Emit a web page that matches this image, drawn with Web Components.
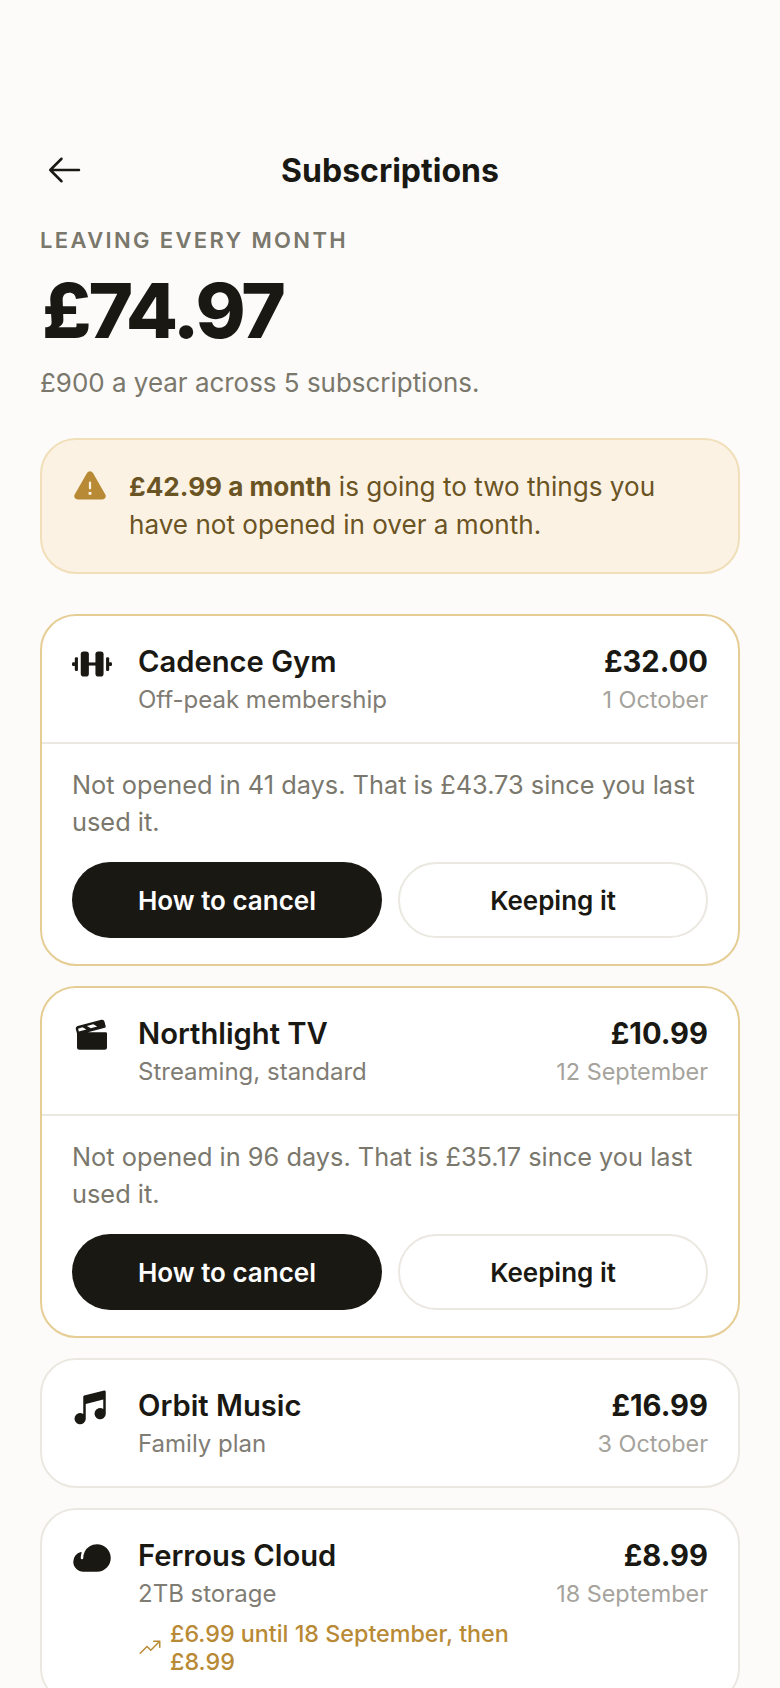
<!DOCTYPE html>
<html lang="en">
<head>
<meta charset="utf-8">
<title>Subscriptions</title>
<style>
  html, body { margin: 0; padding: 0; height: 1688px; overflow: hidden; background: #fcfbf9; }
  body { font-family: Inter, "Liberation Sans", sans-serif; color: #1a1813; }
</style>
</head>
<body>
<subs-page>
  <subs-header title-text="Subscriptions"></subs-header>
  <subs-summary label="Leaving every month" amount="£74.97" note="£900 a year across 5 subscriptions."></subs-summary>
  <subs-alert><strong>£42.99 a month</strong> is going to two things you have not opened in over a month.</subs-alert>
  <subs-list>
    <subs-card icon="barbell" name="Cadence Gym" plan="Off-peak membership" price="£32.00" date="1 October" flagged>
      <subs-nudge>Not opened in 41 days. That is £43.73 since you last used it.</subs-nudge>
    </subs-card>
    <subs-card icon="film" name="Northlight TV" plan="Streaming, standard" price="£10.99" date="12 September" flagged>
      <subs-nudge>Not opened in 96 days. That is £35.17 since you last used it.</subs-nudge>
    </subs-card>
    <subs-card icon="music" name="Orbit Music" plan="Family plan" price="£16.99" date="3 October"></subs-card>
    <subs-card icon="cloud" name="Ferrous Cloud" plan="2TB storage" price="£8.99" date="18 September" rise="£6.99 until 18 September, then £8.99"></subs-card>
  </subs-list>
</subs-page>

<script>
const ICONS = {
  back: `<path d="M224 128H40M112 56l-72 72 72 72" fill="none" stroke="currentColor" stroke-width="16" stroke-linecap="round" stroke-linejoin="round"/>`,
  warning: `<path d="M236.8,188.09,149.35,36.22h0a24.76,24.76,0,0,0-42.7,0L19.2,188.09a23.51,23.51,0,0,0,0,23.72A24.35,24.35,0,0,0,40.55,224h174.9a24.35,24.35,0,0,0,21.33-12.19A23.51,23.51,0,0,0,236.8,188.09ZM120,104a8,8,0,0,1,16,0v40a8,8,0,0,1-16,0Zm8,88a12,12,0,1,1,12-12A12,12,0,0,1,128,192Z"/>`,
  barbell: `<rect x="0" y="116" width="22" height="24" rx="8"/><rect x="18" y="84" width="20" height="88" rx="8"/><rect x="56" y="48" width="52" height="160" rx="18"/><rect x="100" y="118" width="56" height="20"/><rect x="150" y="48" width="52" height="160" rx="18"/><rect x="218" y="84" width="20" height="88" rx="8"/><rect x="234" y="116" width="22" height="24" rx="8"/>`,
  film: `<path d="M216,104H102.09L210,75.51a8,8,0,0,0,5.68-9.84l-8.16-30a15.93,15.93,0,0,0-19.42-11.13L35.81,64.74a15.75,15.75,0,0,0-9.7,7.4,15.51,15.51,0,0,0-1.55,12L32,111.56c0,.14,0,.29,0,.44v88a16,16,0,0,0,16,16H208a16,16,0,0,0,16-16V112A8,8,0,0,0,216,104ZM136.11,53.23l25.29,14.6L120.12,78.7,94.83,64.1Zm-69.18,18.26L92.22,86.09,43.81,98.87,39,81.29Z" fill-rule="evenodd"/>`,
  music: `<path d="M212.92,17.71a7.89,7.89,0,0,0-6.86-1.46l-128,32A8,8,0,0,0,72,56V166.1A36,36,0,1,0,88,196V102.25l112-28V134.1A36,36,0,1,0,216,164V24A8,8,0,0,0,212.92,17.71Z"/>`,
  cloud: `<path d="M160,40A88.09,88.09,0,0,0,81.29,88.67h0A87.48,87.48,0,0,0,72,127.73,8.18,8.18,0,0,1,64.57,136,8,8,0,0,1,56,128a103.66,103.66,0,0,1,5.34-32.92,4,4,0,0,0-4.75-5.18A64.09,64.09,0,0,0,8,152c0,35.19,29.75,64,65,64H160a88.09,88.09,0,0,0,87.93-91.48C246.11,77.54,207.07,40,160,40Z"/>`,
  trend: `<path d="M240,56v64a8,8,0,0,1-16,0V75.31l-82.34,82.35a8,8,0,0,1-11.32,0L96,123.31,29.66,189.66a8,8,0,0,1-11.32-11.32l72-72a8,8,0,0,1,11.32,0L136,140.69,212.69,64H168a8,8,0,0,1,0-16h64A8,8,0,0,1,240,56Z"/>`
};

function icon(name, size) {
  return `<svg width="${size}" height="${size}" viewBox="0 0 256 256" fill="currentColor" aria-hidden="true">${ICONS[name]}</svg>`;
}

class SubsPage extends HTMLElement {
  constructor() {
    super();
    this.attachShadow({ mode: "open" });
  }

  connectedCallback() {
    this.shadowRoot.innerHTML = `
      <style>
        :host { display: block; padding: 149px 40px 0; }
      </style>
      <slot></slot>
    `;
  }
}

class SubsHeader extends HTMLElement {
  constructor() {
    super();
    this.attachShadow({ mode: "open" });
  }

  connectedCallback() {
    this.shadowRoot.innerHTML = `
      <style>
        :host { display: flex; align-items: center; justify-content: center; position: relative; height: 44px; }
        button {
          position: absolute;
          left: 4px;
          top: 1px;
          width: 40px;
          height: 40px;
          padding: 0;
          border: 0;
          background: none;
          color: inherit;
          display: flex;
        }
        h1 { margin: 0; font-size: 32px; line-height: 44px; font-weight: 700; }
      </style>
      <button aria-label="Back">${icon("back", 40)}</button>
      <h1>${this.getAttribute("title-text")}</h1>
    `;
  }
}

class SubsSummary extends HTMLElement {
  constructor() {
    super();
    this.attachShadow({ mode: "open" });
  }

  connectedCallback() {
    this.shadowRoot.innerHTML = `
      <style>
        :host { display: block; margin-top: 33px; }
        .label {
          font-size: 22px;
          line-height: 28px;
          font-weight: 600;
          letter-spacing: 2.35px;
          text-transform: uppercase;
          color: #7a776c;
        }
        .amount {
          margin-top: 14px;
          padding-left: 2px;
          font-size: 76px;
          line-height: 84px;
          font-weight: 800;
          letter-spacing: -2.9px;
        }
        .note { margin-top: 13px; font-size: 25.95px; line-height: 36px; color: #7a776c; }
      </style>
      <div class="label">${this.getAttribute("label")}</div>
      <div class="amount">${this.getAttribute("amount")}</div>
      <div class="note">${this.getAttribute("note")}</div>
    `;
  }
}

class SubsAlert extends HTMLElement {
  constructor() {
    super();
    this.attachShadow({ mode: "open" });
  }

  connectedCallback() {
    this.shadowRoot.innerHTML = `
      <style>
        :host {
          display: flex;
          gap: 21px;
          align-items: flex-start;
          margin-top: 37px;
          padding: 28px 30px;
          border: 2px solid #f0dfb9;
          border-radius: 36px;
          background: #fbf2e3;
          color: #6b5423;
          font-size: 26.1px;
          line-height: 38px;
        }
        svg { flex: none; color: #b98a35; }
        ::slotted(strong) { font-weight: 700; }
      </style>
      ${icon("warning", 36)}
      <div><slot></slot></div>
    `;
  }
}

class SubsList extends HTMLElement {
  constructor() {
    super();
    this.attachShadow({ mode: "open" });
  }

  connectedCallback() {
    this.shadowRoot.innerHTML = `
      <style>
        :host { display: flex; flex-direction: column; gap: 20px; margin-top: 40px; }
      </style>
      <slot></slot>
    `;
  }
}

class SubsCard extends HTMLElement {
  constructor() {
    super();
    this.attachShadow({ mode: "open" });
  }

  connectedCallback() {
    const rise = this.getAttribute("rise");
    this.shadowRoot.innerHTML = `
      <style>
        :host {
          display: block;
          border: 2px solid #ebe8e1;
          border-radius: 36px;
          background: #fff;
          overflow: hidden;
        }
        :host([flagged]) { border-color: #e5cd94; }
        .top { display: flex; align-items: flex-start; padding: 29px 30px 26px; }
        .icon { flex: none; width: 40px; height: 40px; margin: -1px 26px 0 0; }
        .icon svg { display: block; }
        .main { flex: 1; min-width: 0; }
        .name { font-size: 29.2px; line-height: 34px; font-weight: 560; }
        .plan { margin-top: 5px; font-size: 24px; line-height: 32px; color: #7f7c74; }
        .side { flex: none; margin-left: 16px; text-align: right; }
        .price { font-size: 29.2px; line-height: 34px; font-weight: 700; }
        .date { margin-top: 5px; font-size: 23.4px; line-height: 32px; color: #a5a39c; }
        .rise {
          display: flex;
          align-items: center;
          gap: 8px;
          margin-top: 10px;
          font-size: 23.3px;
          line-height: 28px;
          font-weight: 500;
          color: #b98a35;
        }
        .rise svg { flex: none; }
      </style>
      <div class="top">
        <div class="icon">${icon(this.getAttribute("icon"), 40)}</div>
        <div class="main">
          <div class="name">${this.getAttribute("name")}</div>
          <div class="plan">${this.getAttribute("plan")}</div>
          ${rise ? `<div class="rise">${icon("trend", 24)}<span>${rise}</span></div>` : ""}
        </div>
        <div class="side">
          <div class="price">${this.getAttribute("price")}</div>
          <div class="date">${this.getAttribute("date")}</div>
        </div>
      </div>
      <slot></slot>
    `;
  }
}

class SubsNudge extends HTMLElement {
  constructor() {
    super();
    this.attachShadow({ mode: "open" });
  }

  connectedCallback() {
    this.shadowRoot.innerHTML = `
      <style>
        :host { display: block; padding: 22px 30px 26px; border-top: 2px solid #ebe8e1; }
        p { margin: 0; font-size: 25.35px; line-height: 37px; color: #7a776c; }
        .actions { display: grid; grid-template-columns: 1fr 1fr; gap: 16px; margin-top: 22px; }
        button {
          height: 76px;
          padding: 2px 0 0;
          border-radius: 38px;
          font: 600 26px/1 Inter, "Liberation Sans", sans-serif;
        }
        .cancel { border: 0; background: #1a1813; color: #fff; }
        .keep { border: 2px solid #ebe8e1; background: #fff; color: #1a1813; }
      </style>
      <p><slot></slot></p>
      <div class="actions">
        <button class="cancel">How to cancel</button>
        <button class="keep">Keeping it</button>
      </div>
    `;
  }
}

customElements.define("subs-page", SubsPage);
customElements.define("subs-header", SubsHeader);
customElements.define("subs-summary", SubsSummary);
customElements.define("subs-alert", SubsAlert);
customElements.define("subs-list", SubsList);
customElements.define("subs-card", SubsCard);
customElements.define("subs-nudge", SubsNudge);
</script>
</body>
</html>
